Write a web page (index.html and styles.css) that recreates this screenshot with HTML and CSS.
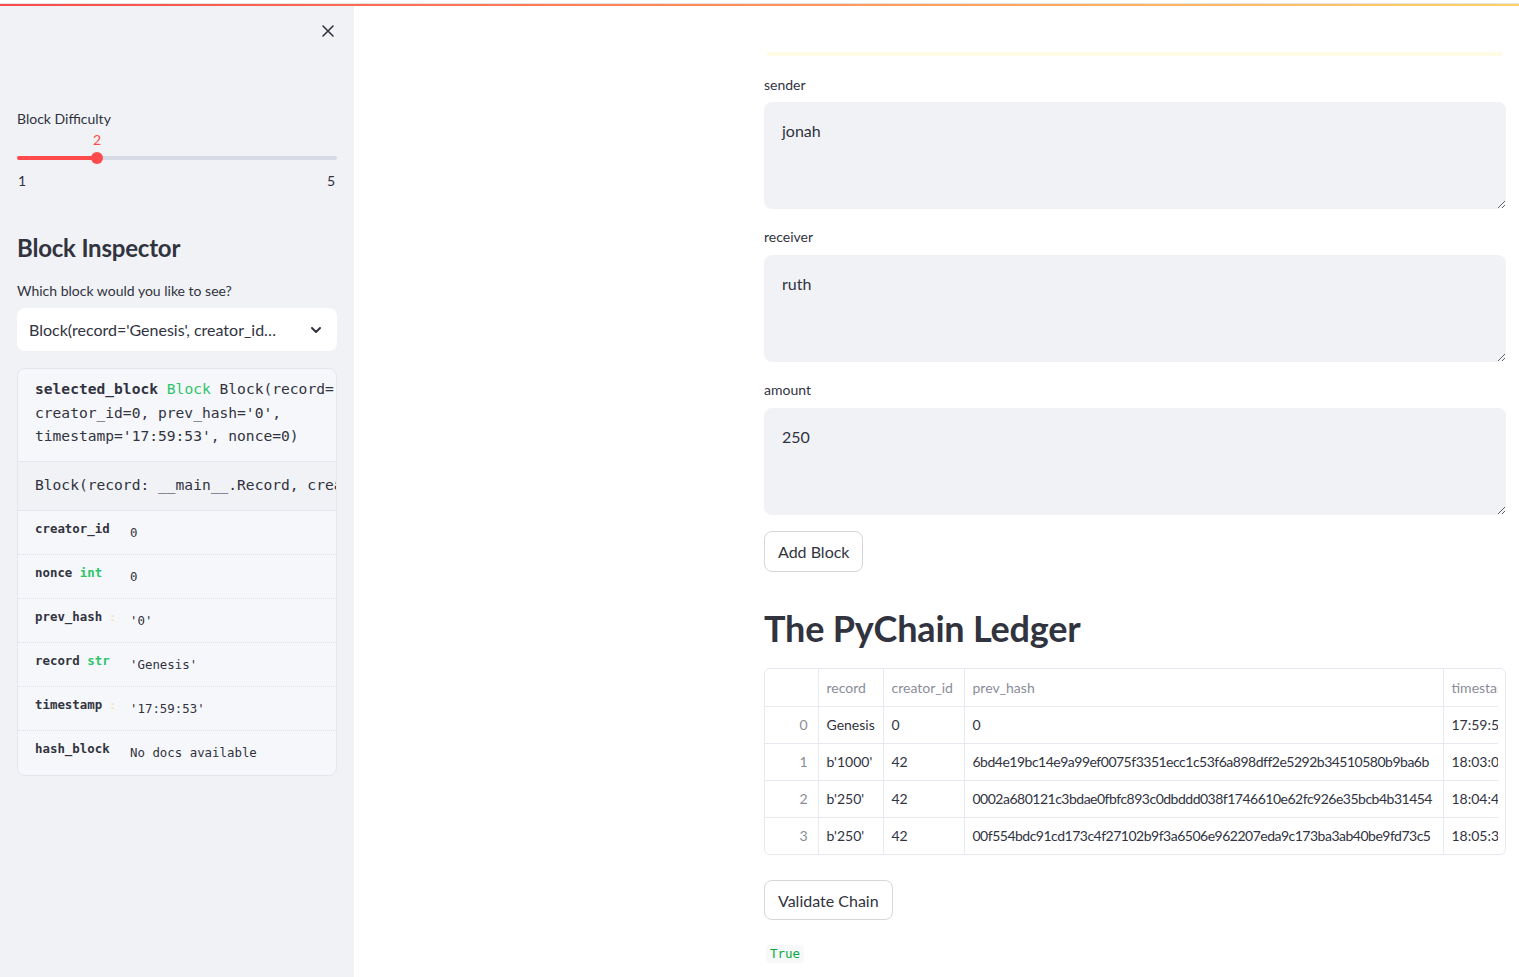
FILE: index.html
```html
<!DOCTYPE html>
<html>
<head>
<meta charset="utf-8">
<link rel="stylesheet" href="styles.css">
</head>
<body>
<div class="decoration"></div>
<div class="app">
  <aside class="sidebar">
    <div class="close-row">
      <svg class="close-icon" width="14" height="14" viewBox="0 0 14 14"><path d="M2 2 L12 12 M12 2 L2 12" stroke="#31333f" stroke-width="1.6" stroke-linecap="round"/></svg>
    </div>
    <div class="slider-block">
      <div class="label">Block Difficulty</div>
      <div class="slider">
        <div class="slider-value">2</div>
        <div class="track"><div class="track-fill"></div></div>
        <div class="thumb"></div>
      </div>
      <div class="slider-ends"><span>1</span><span>5</span></div>
    </div>
    <h3 class="side-title">Block Inspector</h3>
    <div class="label">Which block would you like to see?</div>
    <div class="select">
      <span class="select-text">Block(record='Genesis', creator_id…</span>
      <svg width="14" height="14" viewBox="0 0 14 14"><path d="M3 5 L7 9 L11 5" fill="none" stroke="#31333f" stroke-width="2" stroke-linecap="round" stroke-linejoin="round"/></svg>
    </div>
    <div class="doc-card">
      <div class="doc-head"><b>selected_block</b> <span class="type">Block</span> Block(record='Genesis',<br>creator_id=0, prev_hash='0',<br>timestamp='17:59:53', nonce=0)</div>
      <div class="doc-sig">Block(record: __main__.Record, creator_id: int, prev_hash: str = '0', timestamp: str = '17:59:53', nonce: int = 0)</div>
      <div class="doc-row"><span class="doc-name">creator_id</span><span class="doc-val">0</span></div>
      <div class="doc-row"><span class="doc-name">nonce <span class="type">int</span></span><span class="doc-val">0</span></div>
      <div class="doc-row"><span class="doc-name">prev_hash <span class="faint">:</span></span><span class="doc-val">'0'</span></div>
      <div class="doc-row"><span class="doc-name">record <span class="type">str</span></span><span class="doc-val">'Genesis'</span></div>
      <div class="doc-row"><span class="doc-name">timestamp <span class="faint">:</span></span><span class="doc-val">'17:59:53'</span></div>
      <div class="doc-row"><span class="doc-name">hash_block</span><span class="doc-val">No docs available</span></div>
    </div>
  </aside>
  <main class="main">
    <div class="content">
      <div class="alert-tail"></div>
      <div class="field">
        <label class="label">sender</label>
        <textarea class="textarea" readonly>jonah</textarea>
      </div>
      <div class="field">
        <label class="label">receiver</label>
        <textarea class="textarea" readonly>ruth</textarea>
      </div>
      <div class="field">
        <label class="label">amount</label>
        <textarea class="textarea" readonly>250</textarea>
      </div>
      <button class="btn btn-add">Add Block</button>
      <h2 class="title">The PyChain Ledger</h2>
      <div class="table-box">
        <div class="table-clip">
          <table class="ledger">
            <colgroup><col class="c-idx"><col class="c-rec"><col class="c-cre"><col class="c-hash"><col class="c-ts"></colgroup>
            <thead><tr><th></th><th>record</th><th>creator_id</th><th>prev_hash</th><th>timestamp</th></tr></thead>
            <tbody>
              <tr><td class="idx">0</td><td>Genesis</td><td>0</td><td>0</td><td>17:59:53</td></tr>
              <tr><td class="idx">1</td><td>b'1000'</td><td>42</td><td>6bd4e19bc14e9a99ef0075f3351ecc1c53f6a898dff2e5292b34510580b9ba6b</td><td>18:03:08</td></tr>
              <tr><td class="idx">2</td><td>b'250'</td><td>42</td><td>0002a680121c3bdae0fbfc893c0dbddd038f1746610e62fc926e35bcb4b31454</td><td>18:04:49</td></tr>
              <tr><td class="idx">3</td><td>b'250'</td><td>42</td><td>00f554bdc91cd173c4f27102b9f3a6506e962207eda9c173ba3ab40be9fd73c5</td><td>18:05:37</td></tr>
            </tbody>
          </table>
        </div>
      </div>
      <button class="btn btn-validate">Validate Chain</button>
      <div class="result"><code class="true">True</code></div>
    </div>
  </main>
</div>
</body>
</html>
```
FILE: styles.css
```css
* { box-sizing: border-box; }
html, body { margin: 0; padding: 0; }
body {
  font-family: Lato, "Open Sans", sans-serif;
  color: #31333f;
  background: #ffffff;
  width: 1519px;
  height: 977px;
  overflow: hidden;
}
.decoration {
  height: 6px;
  border-top: 3px solid #ffffff;
  box-shadow: inset 0 1px 0 #e4e4e4;
  background: linear-gradient(90deg, #ff4b4b, #ffd36a);
  background-clip: content-box;
  padding-top: 1px;
}
.app {
  display: flex;
  height: 971px;
}
.sidebar {
  width: 354px;
  flex: none;
  background: #f0f2f6;
  padding: 0 17px;
}
.close-row {
  display: flex;
  justify-content: flex-end;
  padding-top: 18px;
  padding-right: 2px;
  height: 103px;
}
.label {
  display: block;
  font-size: 14px;
  line-height: 20px;
  color: #31333f;
}
.slider {
  position: relative;
  height: 41px;
}
.slider-value {
  position: absolute;
  left: 80px;
  top: 0;
  width: 0;
  display: flex;
  justify-content: center;
  font-size: 14px;
  line-height: 22px;
  color: #ff4b4b;
}
.track {
  position: absolute;
  left: 0; right: 0;
  top: 27px;
  height: 4px;
  border-radius: 2px;
  background: #d5dae5;
}
.track-fill {
  width: 80px;
  height: 4px;
  border-radius: 2px;
  background: #ff4b4b;
}
.thumb {
  position: absolute;
  left: 74px;
  top: 23px;
  width: 12px;
  height: 12px;
  border-radius: 50%;
  background: #ff4b4b;
}
.slider-ends {
  display: flex;
  justify-content: space-between;
  font-size: 14px;
  line-height: 20px;
  padding: 1px 2px 0 1px;
}
.side-title {
  margin: 41px 0 0;
  font-size: 24px;
  font-weight: 700;
  line-height: 32px;
  letter-spacing: -0.2px;
}
.side-title + .label { margin-top: 17px; }
.select {
  margin-top: 7px;
  height: 43px;
  background: #ffffff;
  border-radius: 8px;
  display: flex;
  align-items: center;
  justify-content: space-between;
  padding: 0 14px 0 12px;
  font-size: 16px;
}
.select-text { white-space: nowrap; overflow: hidden; }
.doc-card {
  margin-top: 17px;
  border: 1px solid #e3e6ec;
  border-radius: 8px;
  background: #f6f7fa;
  overflow: hidden;
  font-family: "DejaVu Sans Mono", "Liberation Mono", monospace;
}
.doc-head {
  padding: 8px 0 13px 17px;
  font-size: 14.6px;
  line-height: 23.5px;
  white-space: nowrap;
  border-bottom: 1px solid #e3e6ec;
}
.doc-head b { font-weight: 700; }
.type { color: #2dc56a; }
.faint { color: #f5e3ad; font-size: 10px; }
.doc-sig {
  background: #f0f2f6;
  padding: 0 0 0 17px;
  height: 49px;
  line-height: 45px;
  font-size: 14.6px;
  white-space: nowrap;
  border-bottom: 1px solid #e3e6ec;
}
.doc-row {
  display: flex;
  height: 44px;
  padding: 10px 0 0 17px;
  border-bottom: 1px dotted #dfe2e8;
  font-size: 12.4px;
}
.doc-row:last-child { border-bottom: none; }
.doc-name {
  width: 95px;
  font-weight: 700;
  white-space: nowrap;
}
.doc-val {
  padding-top: 4px;
  font-size: 12.4px;
}
.main {
  flex: 1;
  background: #ffffff;
}
.content {
  margin-left: 410px;
  width: 742px;
  display: flex;
  flex-direction: column;
  align-items: flex-start;
}
.alert-tail {
  margin-top: 46px;
  margin-left: 2px;
  width: 737px;
  height: 4px;
  background: #fffce6;
  border-radius: 0 0 6px 6px;
}
.field { width: 742px; margin-top: 18px; }
.alert-tail + .field { margin-top: 19px; }
.field .label { margin-bottom: 8px; }
.alert-tail + .field .label { margin-bottom: 7px; }
.textarea {
  display: block;
  width: 742px;
  height: 107px;
  border: none;
  outline: none;
  border-radius: 8px;
  background: #f0f2f6;
  padding: 16px 18px;
  font-family: Lato, "Open Sans", sans-serif;
  font-size: 16px;
  line-height: 25.6px;
  color: #31333f;
  resize: vertical;
}
.btn {
  background: #ffffff;
  border: 1px solid #d6d6d9;
  border-radius: 8px;
  font-family: Lato, "Open Sans", sans-serif;
  font-size: 16px;
  color: #31333f;
  padding: 0 13px;
}
.btn-add { margin-top: 16px; height: 41px; }
.title {
  margin: 34px 0 0;
  font-size: 36px;
  font-weight: 700;
  line-height: 44px;
  letter-spacing: -0.2px;
}
.table-box {
  margin-top: 18px;
  width: 742px;
  border: 1px solid #e6e9ef;
  border-radius: 6px;
  overflow: hidden;
}
.table-clip {
  margin-right: 7px;
  overflow: hidden;
}
.ledger {
  border-collapse: collapse;
  table-layout: fixed;
  width: 778px;
  font-size: 14px;
}
.c-idx { width: 53px; }
.c-rec { width: 65px; }
.c-cre { width: 81px; }
.c-hash { width: 479px; }
.c-ts { width: 100px; }
.ledger th, .ledger td {
  text-align: left;
  padding: 0 8px;
  white-space: nowrap;
  overflow: hidden;
  border-right: 1px solid #e6e9ef;
  border-bottom: 1px solid #e6e9ef;
}
.ledger th {
  height: 37px;
  font-weight: 400;
  color: #8a8d99;
}
.ledger td { height: 37px; }
.ledger tbody tr:last-child td { border-bottom: none; }
.ledger td.idx {
  text-align: right;
  color: #8a8d99;
  padding-right: 10px;
}
.ledger td:nth-child(4) { letter-spacing: -0.5px; }
.btn-validate { margin-top: 25px; height: 40px; }
.result { margin-top: 22px; margin-left: 2px; }
.true {
  display: inline-block;
  font-family: "DejaVu Sans Mono", "Liberation Mono", monospace;
  font-size: 12.5px;
  line-height: 18px;
  color: #09ab3b;
  background: #f7f8fa;
  border-radius: 4px;
  padding: 0 4px;
}
```
